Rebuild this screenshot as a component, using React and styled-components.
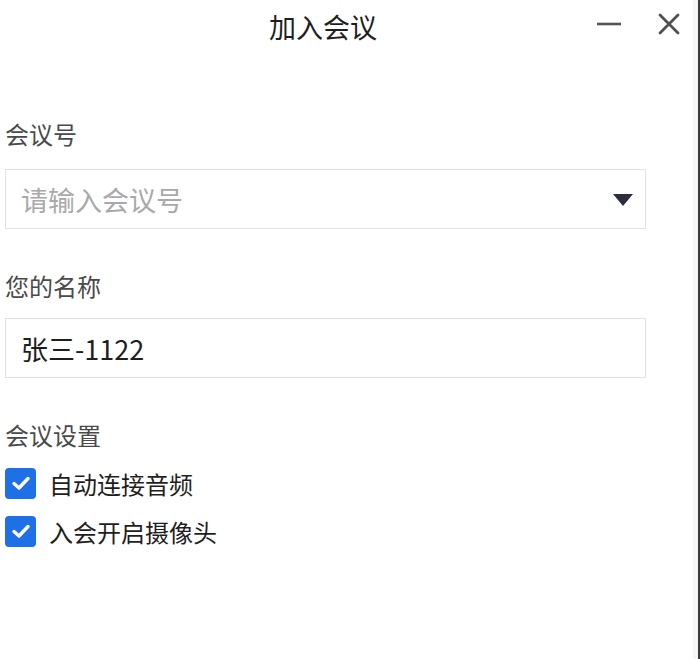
import React, { useState } from "react"
import styled, { createGlobalStyle } from "styled-components"

const GlobalStyle = createGlobalStyle`
  html, body {
    margin: 0;
    padding: 0;
    background: #ffffff;
  }
  body {
    font-family: "Noto Sans CJK SC", "Noto Sans", "Liberation Sans", sans-serif;
  }
`

export default function App() {
  const [audio, setAudio] = useState(true)
  const [camera, setCamera] = useState(true)

  return (
    <Window>
      <GlobalStyle />
      <Main>
        <Header>
          <Title>加入会议</Title>
          <Controls>
            <ControlButton aria-label="minimize">
              <svg width="26" height="26" viewBox="0 0 26 26">
                <line x1="1" y1="13" x2="25" y2="13" stroke="#555" strokeWidth="2.6" />
              </svg>
            </ControlButton>
            <ControlButton aria-label="close">
              <svg width="22" height="22" viewBox="0 0 22 22">
                <path d="M2 2 L20 20 M20 2 L2 20" stroke="#505050" strokeWidth="2.8" strokeLinecap="round" />
              </svg>
            </ControlButton>
          </Controls>
        </Header>

        <Form>
          <Section>
            <Label $space={19}>会议号</Label>
            <Field>
              <Input placeholder="请输入会议号" />
              <Caret>
                <svg width="20" height="12" viewBox="0 0 20 12">
                  <path d="M0 0 H20 L10 12 Z" fill="#2b2d3d" />
                </svg>
              </Caret>
            </Field>
          </Section>

          <Section>
            <Label $space={16}>您的名称</Label>
            <Field>
              <Input defaultValue="张三-1122" />
            </Field>
          </Section>

          <Section $gap={12}>
            <Label $space={2}>会议设置</Label>
            <CheckRow onClick={() => setAudio(!audio)}>
              <Box $checked={audio}>
                {audio && <Tick />}
              </Box>
              <CheckText>自动连接音频</CheckText>
            </CheckRow>
            <CheckRow onClick={() => setCamera(!camera)}>
              <Box $checked={camera}>
                {camera && <Tick />}
              </Box>
              <CheckText>入会开启摄像头</CheckText>
            </CheckRow>
          </Section>
        </Form>
      </Main>
      <Edge />
    </Window>
  )
}

function Tick() {
  return (
    <svg width="20" height="16" viewBox="0 0 20 16">
      <path d="M3 8.5 L8 13 L17 3.5" fill="none" stroke="#fff" strokeWidth="3.4" strokeLinecap="round" strokeLinejoin="round" />
    </svg>
  )
}

const Window = styled.div`
  display: flex;
  width: 700px;
  height: 659px;
  background: #ffffff;
  overflow: hidden;
`

const Main = styled.div`
  flex: 1;
  display: flex;
  flex-direction: column;
`

const Edge = styled.div`
  width: 5px;
  background: #f5f6f8;
  border-right: 2px solid #3a3a3a;
`

const Header = styled.div`
  position: relative;
  height: 54px;
  display: flex;
  align-items: center;
  width: 646px;
  justify-content: center;
`

const Title = styled.div`
  font-size: 27px;
  line-height: 54px;
  color: #1e1e1e;
`

const Controls = styled.div`
  position: absolute;
  top: 11px;
  left: 596px;
  display: flex;
  align-items: center;
  gap: 36px;
`

const ControlButton = styled.button`
  display: flex;
  align-items: center;
  justify-content: center;
  padding: 0;
  border: none;
  background: none;
  cursor: pointer;
`

const Form = styled.div`
  display: flex;
  flex-direction: column;
  padding: 64px 0 0 5px;
  gap: 41px;
`

const Section = styled.div`
  display: flex;
  flex-direction: column;
  gap: ${(p) => p.$gap || 0}px;
`

const Label = styled.div`
  font-size: 24px;
  line-height: 32px;
  color: #4a4a4a;
  margin-bottom: ${(p) => p.$space}px;
`

const Field = styled.div`
  position: relative;
  width: 641px;
  height: 60px;
  box-sizing: border-box;
  border: 1px solid #e2e2e2;
  display: flex;
  align-items: center;
`

const Input = styled.input`
  flex: 1;
  height: 100%;
  border: none;
  outline: none;
  background: transparent;
  padding: 0 0 0 15px;
  font-family: inherit;
  font-size: 27px;
  color: #1e1e1e;

  &::placeholder {
    color: #a9a9a9;
  }
`

const Caret = styled.div`
  display: flex;
  padding-right: 12px;
  margin-top: 2px;
`

const CheckRow = styled.label`
  display: flex;
  align-items: center;
  gap: 13px;
  height: 36px;
  cursor: pointer;
`

const Box = styled.div`
  width: 31px;
  height: 31px;
  box-sizing: border-box;
  border-radius: 4px;
  display: flex;
  align-items: center;
  justify-content: center;
  background: ${(p) => (p.$checked ? "#1f6fe6" : "#fff")};
  border: ${(p) => (p.$checked ? "none" : "2px solid #bbb")};
`

const CheckText = styled.span`
  font-size: 24px;
  color: #1e1e1e;
`
